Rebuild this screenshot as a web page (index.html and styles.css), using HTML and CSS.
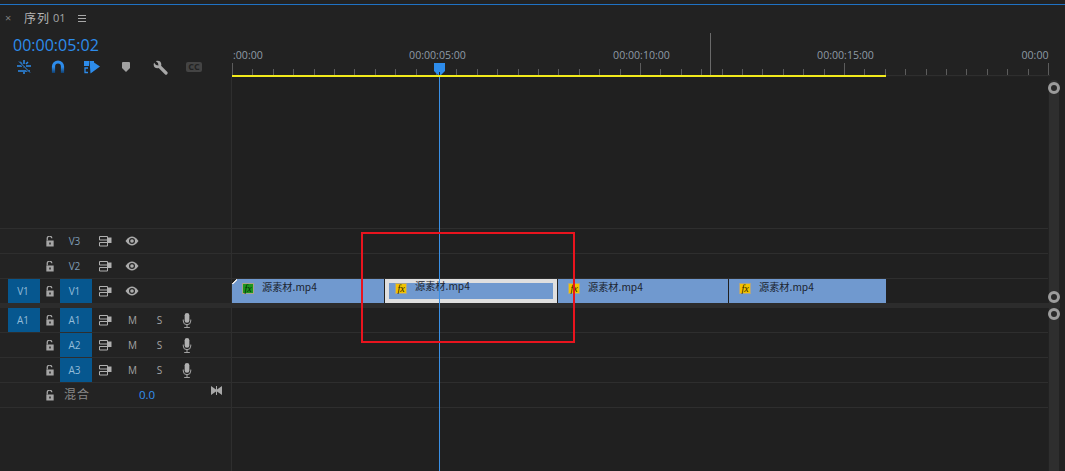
FILE: index.html
```html
<!DOCTYPE html>
<html>
  <head>
    <meta charset="utf-8">
    <title>序列 01</title>
    <link rel="stylesheet" href="styles.css">
  </head>
  <body>
    <svg class="defs" width="0" height="0">
      <defs>
        <linearGradient id="magnet" x1="0" y1="0" x2="0" y2="1">
          <stop offset="0.45" stop-color="#2d8ceb"/>
          <stop offset="1" stop-color="#0f3f70"/>
        </linearGradient>
        <symbol id="lock" viewBox="0 0 10 12">
          <path d="M2 5V3a2.5 2.5 0 0 1 5-.5" fill="none" stroke="#a6a6a6" stroke-width="1.4"/>
          <path d="M1 5h8v6.5H1z M4.2 7.2v2h1.6v-2z" fill="#a6a6a6" fill-rule="evenodd"/>
        </symbol>
        <symbol id="sync" viewBox="0 0 13 11">
          <path d="M.5 .5h8v3.500h-8z M.5 6.500h8v3.500h-8z" fill="none" stroke="#b0b0b0"/>
          <path d="M8 1.500h4.500v5.500H8z" fill="#b0b0b0"/>
        </symbol>
        <symbol id="eye" viewBox="0 0 14 10">
          <path d="M.5 5C3 1.4 5 .5 7 .5s4 .9 6.500 4.500C11 8.600 9 9.500 7 9.500S3 8.600 .5 5z" fill="#ababab"/>
          <circle cx="7" cy="5" r="3" fill="#262626"/>
          <circle cx="7" cy="5" r="1.800" fill="#ababab"/>
        </symbol>
        <symbol id="mic" viewBox="0 0 10 16">
          <rect x="2.500" y="0" width="5" height="10.500" rx="2.500" fill="#b0b0b0"/>
          <path d="M1 7v1.500a4 4 0 0 0 8 0V7M5 12.500V15M2 15.500h6" fill="none" stroke="#b0b0b0"/>
        </symbol>
      </defs>
    </svg>

    <div class="panel">
      <div class="tabbar">
        <span class="tab-close">×</span>
        <span class="tab-title">序列</span>
        <span class="tab-num">01</span>
        <svg class="tab-menu" width="8" height="7" viewBox="0 0 8 7">
          <path d="M0 .5h8M0 3.500h8M0 6.500h8" stroke="#a8a8a8"/>
        </svg>
      </div>

      <div class="ruler-row">
        <div class="controls">
          <div class="timecode">00:00:05:02</div>
          <div class="tools">
            <svg width="16" height="16" viewBox="0 0 16 16">
              <path d="M8 1v4M8 7v2M8 11v4M1 7h5M10 7h5M2 12h5M9 12h5M4 3l2 2M12 3l-2 2" stroke="#2d8ceb" stroke-width="1.500" fill="none"/>
              <path d="M2 2l12 12" stroke="#222" stroke-width="1.500"/>
              <path d="M3 2.500l11 11" stroke="#2d8ceb"/>
            </svg>
            <svg width="14" height="14" viewBox="0 0 14 14">
              <path d="M2.500 13V6.500a4.500 4.500 0 0 1 9 0V13" fill="none" stroke="url(#magnet)" stroke-width="3.200"/>
            </svg>
            <svg width="16" height="14" viewBox="0 0 16 14">
              <path d="M0 1h5v5H0z" fill="#2d8ceb"/>
              <path d="M4 8H1v4.500h3" fill="none" stroke="#2d8ceb" stroke-width="1.300"/>
              <path d="M5.500 1H10v1.500L16 6.500 6.500 13.500z" fill="#2d8ceb"/>
            </svg>
            <svg width="8" height="10" viewBox="0 0 8 10">
              <path d="M0 1q0-1 1-1h6q1 0 1 1v5L4 10 0 6z" fill="#a0a0a0"/>
            </svg>
            <svg width="15" height="15" viewBox="0 0 15 15">
              <path d="M5 5l8 8" stroke="#a8a8a8" stroke-width="3.200" stroke-linecap="round"/>
              <circle cx="4.500" cy="4.500" r="3.800" fill="#a8a8a8"/>
              <path d="M0 1.500L1.500 0 5 3 5.500 5.500 3 5z" fill="#222"/>
            </svg>
            <span class="cc">CC</span>
          </div>
        </div>
        <div class="ruler">
          <div class="labels">
            <span>:00:00</span>
            <span>00:00:05:00</span>
            <span>00:00:10:00</span>
            <span>00:00:15:00</span>
            <span>00:00</span>
          </div>
          <div class="ticks"></div>
          <div class="work-area"></div>
          <div class="ruler-mark"></div>
        </div>
      </div>

      <div class="section section-video">
        <div class="rows">
          <div class="row row-empty">
            <div class="head"></div>
            <div class="lane"></div>
          </div>
          <div class="row">
            <div class="head">
              <span class="target"></span>
              <svg class="lock"><use href="#lock"/></svg>
              <span class="source">V3</span>
              <svg class="sync"><use href="#sync"/></svg>
              <svg class="eye"><use href="#eye"/></svg>
            </div>
            <div class="lane"></div>
          </div>
          <div class="row">
            <div class="head">
              <span class="target"></span>
              <svg class="lock"><use href="#lock"/></svg>
              <span class="source">V2</span>
              <svg class="sync"><use href="#sync"/></svg>
              <svg class="eye"><use href="#eye"/></svg>
            </div>
            <div class="lane"></div>
          </div>
          <div class="row row-last">
            <div class="head">
              <span class="target on">V1</span>
              <svg class="lock"><use href="#lock"/></svg>
              <span class="source on">V1</span>
              <svg class="sync"><use href="#sync"/></svg>
              <svg class="eye"><use href="#eye"/></svg>
            </div>
            <div class="lane clips">
              <div class="clip clip-a clip-first"><i class="fx green">fx</i><span>源素材.mp4</span></div>
              <div class="clip clip-b selected"><i class="fx">fx</i><span>源素材.mp4</span></div>
              <div class="clip clip-c"><i class="fx">fx</i><span>源素材.mp4</span></div>
              <div class="clip clip-d"><i class="fx">fx</i><span>源素材.mp4</span></div>
            </div>
          </div>
        </div>
        <div class="scroll scroll-video"><b></b><b></b></div>
      </div>

      <div class="divider"></div>

      <div class="section section-audio">
        <div class="rows">
          <div class="row">
            <div class="head">
              <span class="target on">A1</span>
              <svg class="lock"><use href="#lock"/></svg>
              <span class="source on">A1</span>
              <svg class="sync"><use href="#sync"/></svg>
              <span class="btn">M</span>
              <span class="btn">S</span>
              <svg class="mic"><use href="#mic"/></svg>
            </div>
            <div class="lane"></div>
          </div>
          <div class="row">
            <div class="head">
              <span class="target"></span>
              <svg class="lock"><use href="#lock"/></svg>
              <span class="source on">A2</span>
              <svg class="sync"><use href="#sync"/></svg>
              <span class="btn">M</span>
              <span class="btn">S</span>
              <svg class="mic"><use href="#mic"/></svg>
            </div>
            <div class="lane"></div>
          </div>
          <div class="row">
            <div class="head">
              <span class="target"></span>
              <svg class="lock"><use href="#lock"/></svg>
              <span class="source on">A3</span>
              <svg class="sync"><use href="#sync"/></svg>
              <span class="btn">M</span>
              <span class="btn">S</span>
              <svg class="mic"><use href="#mic"/></svg>
            </div>
            <div class="lane"></div>
          </div>
          <div class="row">
            <div class="head">
              <span class="target"></span>
              <svg class="lock"><use href="#lock"/></svg>
              <span class="mix-label">混合</span>
              <span class="mix-value">0.0</span>
              <svg class="mix-icon" width="11" height="9" viewBox="0 0 11 9">
                <path d="M0 0l5 3.500V0h1v3.500L11 0v9L6 5.500V9H5V5.500L0 9z" fill="#a8a8a8"/>
              </svg>
            </div>
            <div class="lane"></div>
          </div>
          <div class="row row-fill">
            <div class="head"></div>
            <div class="lane"></div>
          </div>
        </div>
        <div class="scroll scroll-audio"><b></b></div>
      </div>
    </div>

    <div class="playhead">
      <svg width="11" height="12" viewBox="0 0 11 12">
        <path d="M0 0h11v8L7 12H6V9H5v3H4L0 8z" fill="#2d8ceb"/>
      </svg>
    </div>
    <div class="callout"></div>
  </body>
</html>
```

FILE: styles.css
```css
html, body {
  margin: 0;
  height: 471px;
  overflow: hidden;
  background-color: #222222;
  font-family: "Open Sans", "Noto Sans CJK SC", sans-serif;
  color: #a8a8a8;
}
.defs {
  position: absolute;
}
.panel {
  margin-top: 4px;
  border-top: 1px solid #1f72c4;
}

/* tab */
.tabbar {
  height: 28px;
  display: flex;
  align-items: center;
  padding-bottom: 4px;
  box-sizing: border-box;
}
.tab-close {
  width: 24px;
  padding-left: 5px;
  box-sizing: border-box;
  font-size: 11px;
  color: #808080;
}
.tab-title {
  font-family: "Noto Sans CJK SC", sans-serif;
  font-size: 12px;
  letter-spacing: 1px;
  color: #b4b4b4;
}
.tab-num {
  margin-left: 3px;
  font-size: 11px;
  color: #a8a8a8;
}
.tab-menu {
  margin: 2px 0 0 12px;
}

/* ruler row */
.ruler-row {
  height: 44px;
  display: flex;
}
.controls {
  width: 232px;
  flex: none;
}
.timecode {
  padding: 1px 0 0 13px;
  height: 23px;
  font-size: 16px;
  font-weight: 500;
  line-height: 23px;
  color: #2d8ceb;
}
.tools {
  display: grid;
  grid-template-columns: repeat(6, 34px);
  justify-items: center;
  align-items: center;
  margin-top: 2px;
  padding-left: 7px;
  height: 16px;
}
.cc {
  width: 16px;
  height: 10px;
  border-radius: 2px;
  background-color: #444444;
  color: #222222;
  font-size: 9px;
  font-weight: 700;
  line-height: 10px;
  text-align: center;
}
.ruler {
  position: relative;
  width: 818px;
  overflow: hidden;
}
.labels {
  display: flex;
  padding-top: 14px;
  height: 16px;
}
.labels span {
  flex: none;
  width: 204px;
  text-align: center;
  font-size: 10.6px;
  line-height: 16px;
  color: #8f9ba6;
}
.labels span:first-child {
  box-sizing: border-box;
  width: 103.5px;
  padding-left: 1px;
  text-align: left;
}
.labels span:last-child {
  box-sizing: border-box;
  padding-left: 74px;
  text-align: left;
}
.ticks {
  position: absolute;
  left: 0;
  right: 0;
  top: 30px;
  height: 12px;
  background-image:
    repeating-linear-gradient(to right, #5c5c5c 0, #5c5c5c 1px, transparent 1px, transparent 204px),
    repeating-linear-gradient(to right, #5c5c5c 0, #5c5c5c 1px, transparent 1px, transparent 20.4px);
  background-size: 100% 12px, 100% 6px;
  background-position: 0 0, 0 6px;
  background-repeat: no-repeat;
}
.work-area {
  position: absolute;
  left: 0;
  right: 0;
  top: 42px;
  height: 1px;
  background-color: #2e2e2e;
}
.work-area::before {
  content: "";
  display: block;
  width: 654px;
  height: 2px;
  background-color: #f2ea1c;
}
.ruler-mark {
  position: absolute;
  left: 478px;
  top: 0;
  width: 1px;
  height: 42px;
  background-color: #6a6a6a;
}

/* tracks */
.section {
  display: flex;
}
.section-video {
  height: 226px;
}
.section-audio {
  height: 163px;
}
.rows {
  width: 1048px;
  flex: none;
  display: flex;
  flex-direction: column;
}
.row {
  height: 25px;
  flex: none;
  display: flex;
  box-sizing: border-box;
  border-bottom: 1px solid #2e2e2e;
}
.row-empty {
  height: 152px;
}
.row-last {
  height: 24px;
  border-bottom: 0;
}
.row-fill {
  flex: 1;
  border-bottom: 0;
}
.head {
  width: 232px;
  flex: none;
  box-sizing: border-box;
  padding-left: 8px;
  display: flex;
  align-items: center;
  border-right: 1px solid #2e2e2e;
  background-color: #232323;
}
.lane {
  flex: 1;
  background-color: #202020;
}
.row-empty .head, .row-fill .head {
  background-color: #222222;
}
.target, .source {
  flex: none;
  box-sizing: border-box;
  width: 32px;
  height: 100%;
  padding-right: 2px;
  font-size: 10px;
  line-height: 24px;
  text-align: center;
  color: #7f9bb5;
}
.source {
  padding-right: 3px;
}
.on {
  background-color: #06578f;
  color: #93bcd9;
}
.lock {
  flex: none;
  width: 10px;
  height: 11px;
  margin: 0 5px;
}
.sync {
  flex: none;
  width: 13px;
  height: 11px;
  margin: 0 7px;
}
.eye {
  flex: none;
  width: 14px;
  height: 10px;
  margin: 0 6px;
}
.btn {
  flex: none;
  width: 27px;
  font-size: 10px;
  text-align: center;
  color: #a4a4a4;
}
.mic {
  flex: none;
  width: 10px;
  height: 15px;
  margin-left: 9px;
}
.mix-label {
  flex: none;
  width: 73px;
  margin: -3px 0 0 4px;
  font-family: "Noto Sans CJK SC", sans-serif;
  font-size: 12px;
  letter-spacing: 1px;
  color: #888888;
}
.mix-value {
  flex: none;
  width: 20px;
  margin-top: -1px;
  font-size: 11.5px;
  text-align: center;
  color: #3392f0;
}
.mix-icon {
  flex: none;
  margin: -9px 0 0 54px;
}

/* clips */
.clips {
  display: flex;
  align-items: stretch;
}
.clip {
  flex: none;
  box-sizing: border-box;
  padding-left: 10px;
  display: flex;
  align-items: flex-start;
  background-color: #7099cf;
  font-family: "Noto Sans CJK SC", sans-serif;
  font-size: 10.2px;
  line-height: 16px;
  color: #1b2430;
}
.clip-a { width: 152px; position: relative; }
.clip-b { width: 172px; margin-left: 1px; }
.clip-c { width: 170px; margin-left: 1px; }
.clip-d { width: 157px; margin-left: 1px; }
.clip-first::before {
  content: "";
  position: absolute;
  left: 0;
  top: 0;
  width: 5px;
  height: 5px;
  background: linear-gradient(135deg, #222222 0, #222222 45%, #e4e4e4 45%, #e4e4e4 62%, transparent 62%);
}
.selected {
  border: 4px solid #dfdfdf;
  padding-left: 6px;
  line-height: 8px;
}
.selected .fx {
  margin-top: 0;
}
.fx {
  flex: none;
  box-sizing: border-box;
  width: 12px;
  height: 11px;
  margin: 4px 8px 0 0;
  border: 1px solid #a9a48c;
  background-color: #f2c200;
  font-family: "Liberation Serif", serif;
  font-size: 10px;
  line-height: 9px;
  text-align: center;
  color: #2b2400;
}
.green {
  background-color: #1d961d;
  color: #062906;
}
.selected span {
  margin-top: -1px;
}

.divider {
  width: 1060px;
  height: 5px;
  background-color: #2c2c2c;
}
.scroll {
  flex: none;
  width: 10px;
  margin-left: 1px;
  background-color: #2e2e2e;
  display: flex;
  flex-direction: column;
  justify-content: space-between;
}
.scroll-video {
  margin-top: 3px;
  padding-top: 2px;
  box-sizing: border-box;
  height: 223px;
  border-radius: 5px 5px 0 0;
}
.scroll b {
  display: block;
  box-sizing: border-box;
  width: 12px;
  height: 12px;
  margin-left: -1px;
  border: 3px solid #9c9c9c;
  border-radius: 50%;
  background-color: #2a2a2a;
}

/* over the tracks */
.playhead {
  position: absolute;
  left: 434px;
  top: 63px;
  width: 11px;
  height: 408px;
}
.playhead svg {
  display: block;
}
.playhead::after {
  content: "";
  position: absolute;
  left: 5px;
  top: 14px;
  bottom: 0;
  width: 1px;
  background-color: #3a90e6;
}
.callout {
  position: absolute;
  left: 361px;
  top: 232px;
  width: 210px;
  height: 107px;
  border: 2px solid #e8141e;
}
```
